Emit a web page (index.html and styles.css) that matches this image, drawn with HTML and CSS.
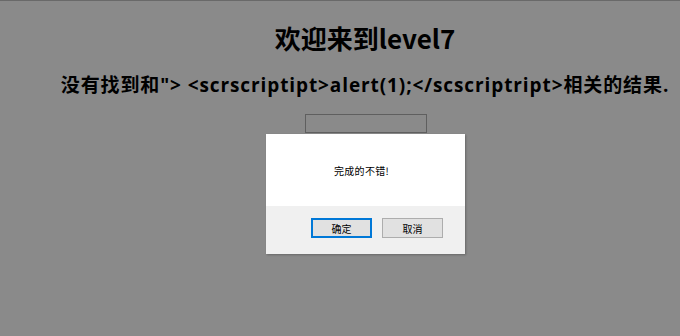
FILE: index.html
```html
<!DOCTYPE html>
<html lang="zh">
<head>
<meta charset="utf-8">
<title>level7</title>
<link rel="stylesheet" href="styles.css">
</head>
<body>
<div class="page">
  <h1 class="title">欢迎来到level7</h1>
  <h2 class="result">没有找到和"&gt; &lt;scrscriptipt&gt;alert(1);&lt;/scscriptript&gt;相关的结果.</h2>
  <div class="search"><input class="keyword" type="text" value=""></div>
</div>
<div class="overlay"></div>
<div class="dialog">
  <div class="dialog-body">完成的不错!</div>
  <div class="dialog-foot">
    <button class="btn btn-primary">确定</button>
    <button class="btn">取消</button>
  </div>
</div>
</body>
</html>
```

FILE: styles.css
```css
html, body {
  margin: 0;
  padding: 0;
  width: 680px;
  height: 336px;
  overflow: hidden;
  background: #ffffff;
  font-family: "Noto Sans CJK SC", "Noto Sans", sans-serif;
  color: #000;
}
.page {
  width: 630px;
  padding: 20px 0 0 50px;
  text-align: center;
}
.title {
  margin: 0;
  font-size: 26px;
  line-height: 36px;
  font-weight: bold;
}
.result {
  margin: 15px 0 0 0;
  font-family: "Open Sans", "Noto Sans CJK SC", sans-serif;
  font-size: 19px;
  line-height: 28px;
  font-weight: bold;
  letter-spacing: 0.9px;
  white-space: nowrap;
}
.search {
  margin-top: 15px;
  display: flex;
  justify-content: center;
}
.keyword {
  box-sizing: border-box;
  width: 122px;
  height: 19px;
  margin: 0 0 0 1px;
  border: 1px solid #b0b0b0;
  background: #fff;
  padding: 0;
}
.overlay {
  position: absolute;
  left: 0;
  top: 0;
  width: 680px;
  height: 336px;
  background: rgba(0, 0, 0, 0.46);
  border-top: 1px solid rgba(0, 0, 0, 0.24);
  box-sizing: border-box;
}
.dialog {
  position: absolute;
  left: 266px;
  top: 134px;
  width: 199px;
  height: 120px;
  background: #fff;
  display: flex;
  flex-direction: column;
  box-shadow: 1px 1px 2px rgba(0, 0, 0, 0.25);
}
.dialog-body {
  height: 72px;
  display: flex;
  align-items: center;
  justify-content: center;
  font-size: 10px;
  letter-spacing: 0.3px;
  color: #000;
  padding-right: 8px;
}
.dialog-foot {
  flex: 1;
  background: #f0f0f0;
  display: flex;
  justify-content: flex-end;
  align-items: flex-start;
  gap: 10px;
  padding: 12px 22px 0 0;
}
.btn {
  box-sizing: border-box;
  width: 61px;
  height: 20px;
  margin: 0;
  padding: 0;
  border: 1px solid #adadad;
  background: #e1e1e1;
  font-family: "Noto Sans CJK SC", sans-serif;
  font-size: 10px;
  color: #000;
}
.btn-primary {
  border: 2px solid #0078d7;
}
```
